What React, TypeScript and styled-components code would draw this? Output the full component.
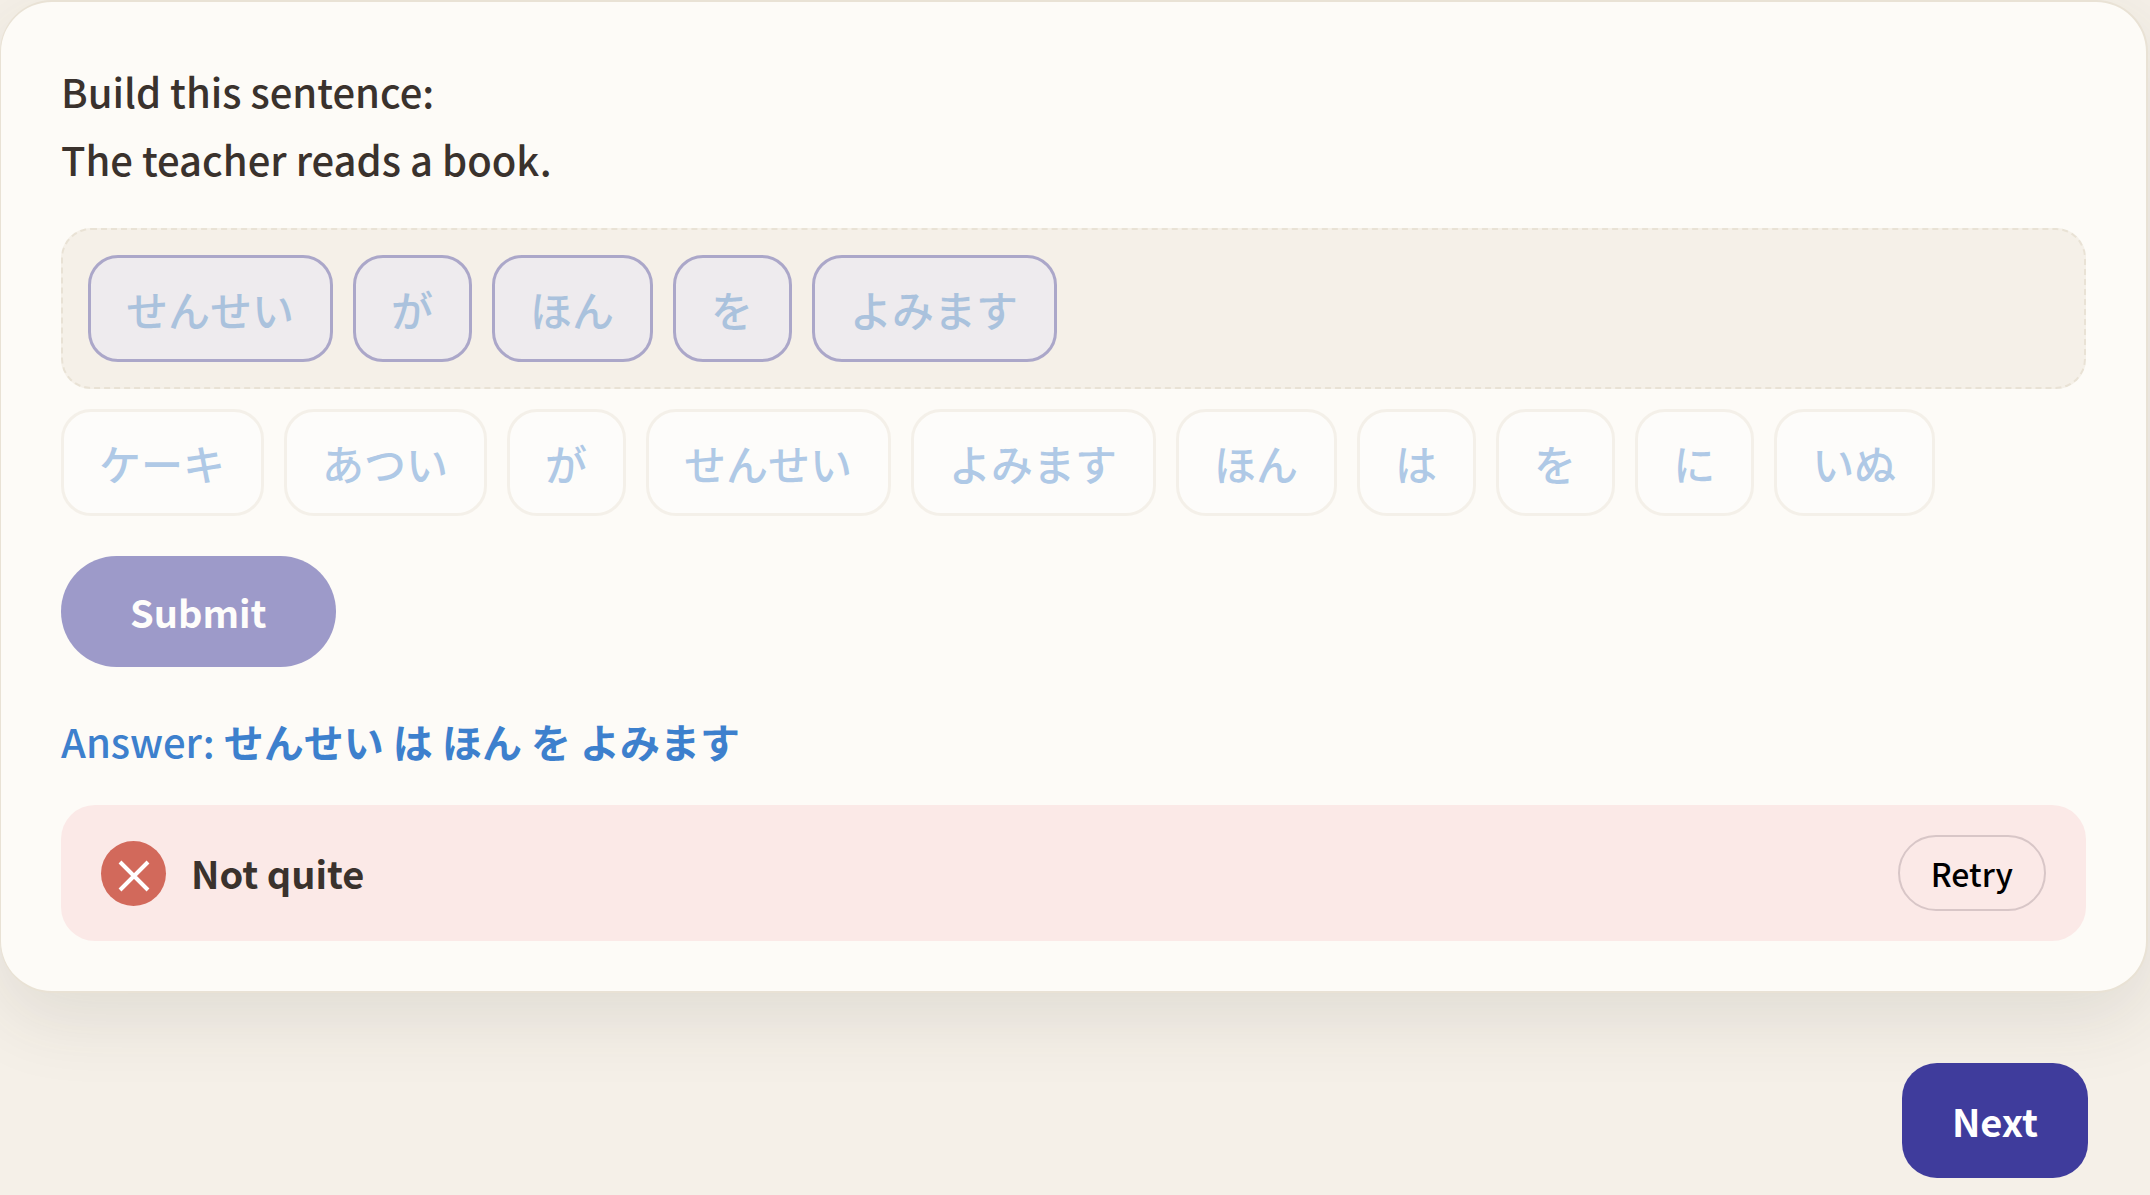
import React, { useState } from "react";
import styled, { createGlobalStyle, css } from "styled-components";

const color = {
  page: "#f5f0e8",
  card: "#fdfbf7",
  line: "#e9e2d5",
  ink: "#3a322d",
  blue: "#3d80cd",
  indigo: "#3f3c9c",
  tint: "#e5e5f7",
  errorBg: "#fbe9e7",
  error: "#d2695b",
};

const GlobalStyle = createGlobalStyle`
  *, *::before, *::after { box-sizing: border-box; }
  body {
    margin: 0;
    min-height: 100vh;
    background: ${color.page};
    color: ${color.ink};
    font-family: "Noto Sans CJK JP", sans-serif;
  }
  button { font-family: inherit; cursor: pointer; }
  button:disabled { cursor: default; }
`;

const Page = styled.main`
  padding-right: 2px;
`;

const Card = styled.section`
  display: flex;
  flex-direction: column;
  align-items: flex-start;
  padding: 55px 60px 50px;
  background: ${color.card};
  border: 2px solid ${color.line};
  border-left-width: 1px;
  border-radius: 52px;
  box-shadow: 0 25px 75px rgba(58, 52, 42, 0.11);
`;

const Prompt = styled.p`
  margin: 0 0 35px;
  font-size: 40px;
  font-weight: 500;
  line-height: 68px;
`;

const TileRow = styled.div`
  display: flex;
  flex-wrap: wrap;
  gap: 20px;
`;

const AnswerZone = styled(TileRow)`
  align-self: stretch;
  margin-bottom: 20px;
  padding: 25px;
  background: ${color.page};
  border: 2px dashed ${color.line};
  border-radius: 30px;
`;

const Tile = styled.button<{ $placed?: boolean }>`
  height: 107px;
  padding: 0 36px 0 35px;
  background: #fff;
  border: 3px solid ${color.line};
  border-radius: 30px;
  color: ${color.blue};
  font-size: 42px;
  font-weight: 500;
  line-height: 60px;
  &:disabled { opacity: 0.4; }
  ${({ $placed }) =>
    $placed &&
    css`
      background: ${color.tint};
      border-color: ${color.indigo};
    `}
`;

const Submit = styled.button`
  height: 111px;
  margin-top: 40px;
  padding: 0 69px;
  background: ${color.indigo};
  border: 0;
  border-radius: 56px;
  color: #fff;
  font-size: 38px;
  font-weight: 700;
  &:disabled { opacity: 0.5; }
`;

const Answer = styled.p`
  margin: 40px 0 30px;
  color: ${color.blue};
  font-size: 40px;
  font-weight: 500;
  line-height: 68px;
`;

const Feedback = styled.div`
  align-self: stretch;
  display: flex;
  align-items: center;
  gap: 25px;
  padding: 30px 40px;
  background: ${color.errorBg};
  border-radius: 34px;
`;

const Badge = styled.span`
  display: grid;
  place-items: center;
  width: 65px;
  height: 65px;
  padding-top: 5px;
  background: ${color.error};
  border-radius: 50%;
`;

const Verdict = styled.strong`
  flex: 1;
  font-size: 38px;
  font-weight: 700;
  line-height: 60px;
`;

const Retry = styled.button`
  height: 76px;
  padding: 0 31px;
  background: transparent;
  border: 2px solid #d8c6c7;
  border-radius: 38px;
  color: #000;
  font-size: 32px;
  font-weight: 500;
`;

const Footer = styled.footer`
  display: flex;
  justify-content: flex-end;
  padding: 70px 60px 16px;
`;

const Next = styled.button`
  height: 115px;
  padding: 0 50px;
  background: ${color.indigo};
  border: 0;
  border-radius: 35px;
  color: #fff;
  font-size: 38px;
  font-weight: 700;
`;

const bank = ["ケーキ", "あつい", "が", "せんせい", "よみます", "ほん", "は", "を", "に", "いぬ"];

export default function App() {
  const [placed, setPlaced] = useState(["せんせい", "が", "ほん", "を", "よみます"]);
  const [checked, setChecked] = useState(true);

  const retry = () => {
    setPlaced([]);
    setChecked(false);
  };

  return (
    <>
      <GlobalStyle />
      <Page>
        <Card>
          <Prompt>
            Build this sentence:
            <br />
            The teacher reads a book.
          </Prompt>
          <AnswerZone lang="ja">
            {placed.map((word, i) => (
              <Tile
                key={i}
                $placed
                disabled={checked}
                onClick={() => setPlaced(placed.filter((_, j) => j !== i))}
              >
                {word}
              </Tile>
            ))}
          </AnswerZone>
          <TileRow lang="ja">
            {bank.map((word) => (
              <Tile key={word} disabled={checked} onClick={() => setPlaced([...placed, word])}>
                {word}
              </Tile>
            ))}
          </TileRow>
          <Submit disabled={checked} onClick={() => setChecked(true)}>
            Submit
          </Submit>
          {checked && (
            <>
              <Answer>
                Answer: <b lang="ja">せんせい は ほん を よみます</b>
              </Answer>
              <Feedback>
                <Badge>
                  <svg width="32" height="32" viewBox="0 0 32 32" aria-hidden="true">
                    <path d="M2 2 30 30M30 2 2 30" stroke="#fff" strokeWidth="4" fill="none" />
                  </svg>
                </Badge>
                <Verdict>Not quite</Verdict>
                <Retry onClick={retry}>Retry</Retry>
              </Feedback>
            </>
          )}
        </Card>
        <Footer>
          <Next>Next</Next>
        </Footer>
      </Page>
    </>
  );
}
